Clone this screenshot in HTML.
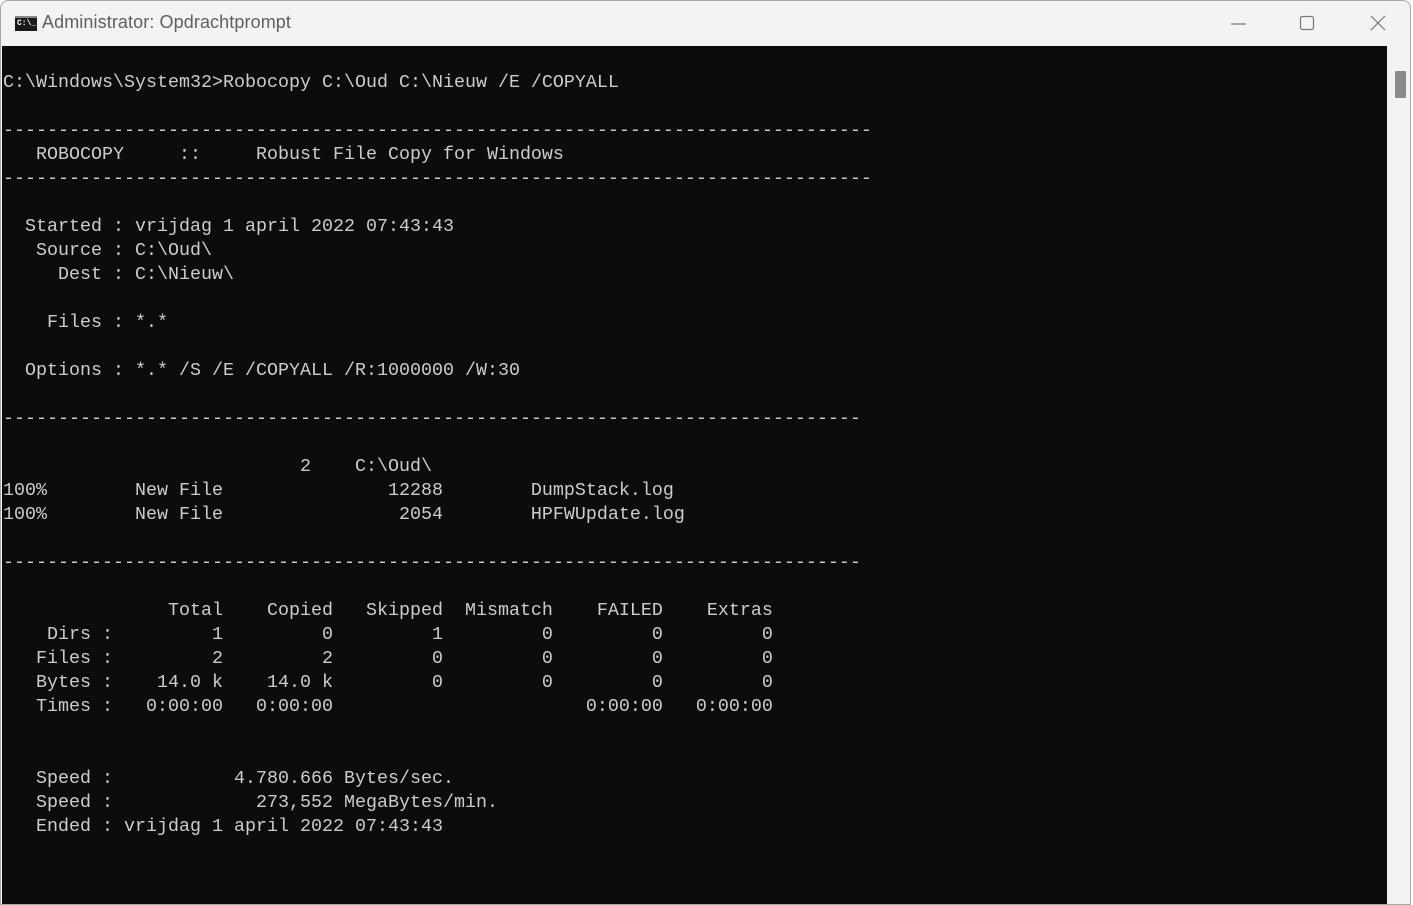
<!DOCTYPE html>
<html><head><meta charset="utf-8"><style>
html,body{margin:0;padding:0;width:1413px;height:903px;overflow:hidden;background:#fff}
.win{position:absolute;left:0;top:0;width:1411px;height:905px;border:1px solid #a8a8a8;border-radius:8px 8px 0 0;background:#f3f3f3;box-sizing:border-box;overflow:hidden}
.title{position:absolute;left:41px;top:11px;font:18px "Liberation Sans",sans-serif;color:#606060;letter-spacing:0.1px}
.icon{position:absolute;left:14px;top:15px;width:22px;height:15px;background:#1a1a1a;border-top:2px solid #888;box-sizing:border-box}
.icon span{position:absolute;left:2px;top:1px;font:bold 8px "Liberation Mono",monospace;color:#fff}
.con{position:absolute;left:1px;top:45px;width:1385px;height:860px;background:#0c0c0c}
pre{margin:0;position:absolute;left:1px;top:1px;font:18.33px/24px "Liberation Mono",monospace;color:#cccccc}
.sb{position:absolute;left:1394px;top:70px;width:11px;height:27px;background:#8a8a8a;border-radius:1px}
</style></head><body>
<div class="win">
<div class="icon"><span>C:\_</span></div>
<div class="title">Administrator: Opdrachtprompt</div>
<svg style="position:absolute;left:1225px;top:12px" width="170" height="22">
<line x1="5" y1="11" x2="20" y2="11" stroke="#777" stroke-width="1.2"/>
<rect x="74.5" y="3.5" width="13" height="13" rx="2" fill="none" stroke="#777" stroke-width="1.2"/>
<line x1="145" y1="3" x2="159" y2="17" stroke="#777" stroke-width="1.2"/>
<line x1="159" y1="3" x2="145" y2="17" stroke="#777" stroke-width="1.2"/>
</svg>
<div class="con"><pre>

C:\Windows\System32>Robocopy C:\Oud C:\Nieuw /E /COPYALL

-------------------------------------------------------------------------------
   ROBOCOPY     ::     Robust File Copy for Windows
-------------------------------------------------------------------------------

  Started : vrijdag 1 april 2022 07:43:43
   Source : C:\Oud\
     Dest : C:\Nieuw\

    Files : *.*

  Options : *.* /S /E /COPYALL /R:1000000 /W:30

------------------------------------------------------------------------------

                           2    C:\Oud\
100%        New File               12288        DumpStack.log
100%        New File                2054        HPFWUpdate.log

------------------------------------------------------------------------------

               Total    Copied   Skipped  Mismatch    FAILED    Extras
    Dirs :         1         0         1         0         0         0
   Files :         2         2         0         0         0         0
   Bytes :    14.0 k    14.0 k         0         0         0         0
   Times :   0:00:00   0:00:00                       0:00:00   0:00:00


   Speed :           4.780.666 Bytes/sec.
   Speed :             273,552 MegaBytes/min.
   Ended : vrijdag 1 april 2022 07:43:43
</pre></div>
<div class="sb"></div>
</div>
</body></html>
